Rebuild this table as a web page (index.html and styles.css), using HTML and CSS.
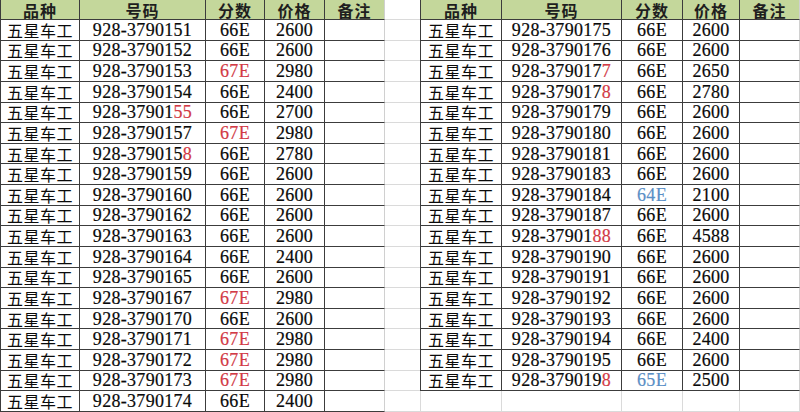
FILE: index.html
```html
<!DOCTYPE html>
<html lang="zh">
<head>
<meta charset="utf-8">
<link rel="stylesheet" href="styles.css">
</head>
<body>
<div class="sheet">
  <div class="c t h l">品种</div><div class="c t h">号码</div><div class="c t h">分数</div><div class="c t h">价格</div><div class="c t h x">备注</div><div class="c g"></div><div class="c t h l">品种</div><div class="c t h">号码</div><div class="c t h">分数</div><div class="c t h">价格</div><div class="c t h x">备注</div>

  <div class="c t n l">五星车工</div><div class="c t">928-3790151</div><div class="c t">66E</div><div class="c t">2600</div><div class="c t x"></div><div class="c g"></div><div class="c t n l">五星车工</div><div class="c t">928-3790175</div><div class="c t">66E</div><div class="c t">2600</div><div class="c t x"></div>

  <div class="c t n l">五星车工</div><div class="c t">928-3790152</div><div class="c t">66E</div><div class="c t">2600</div><div class="c t x"></div><div class="c g"></div><div class="c t n l">五星车工</div><div class="c t">928-3790176</div><div class="c t">66E</div><div class="c t">2600</div><div class="c t x"></div>

  <div class="c t n l">五星车工</div><div class="c t">928-3790153</div><div class="c t r">67E</div><div class="c t">2980</div><div class="c t x"></div><div class="c g"></div><div class="c t n l">五星车工</div><div class="c t">928-379017<span class="r">7</span></div><div class="c t">66E</div><div class="c t">2650</div><div class="c t x"></div>

  <div class="c t n l">五星车工</div><div class="c t">928-3790154</div><div class="c t">66E</div><div class="c t">2400</div><div class="c t x"></div><div class="c g"></div><div class="c t n l">五星车工</div><div class="c t">928-379017<span class="r">8</span></div><div class="c t">66E</div><div class="c t">2780</div><div class="c t x"></div>

  <div class="c t n l">五星车工</div><div class="c t">928-37901<span class="r">55</span></div><div class="c t">66E</div><div class="c t">2700</div><div class="c t x"></div><div class="c g"></div><div class="c t n l">五星车工</div><div class="c t">928-3790179</div><div class="c t">66E</div><div class="c t">2600</div><div class="c t x"></div>

  <div class="c t n l">五星车工</div><div class="c t">928-3790157</div><div class="c t r">67E</div><div class="c t">2980</div><div class="c t x"></div><div class="c g"></div><div class="c t n l">五星车工</div><div class="c t">928-3790180</div><div class="c t">66E</div><div class="c t">2600</div><div class="c t x"></div>

  <div class="c t n l">五星车工</div><div class="c t">928-379015<span class="r">8</span></div><div class="c t">66E</div><div class="c t">2780</div><div class="c t x"></div><div class="c g"></div><div class="c t n l">五星车工</div><div class="c t">928-3790181</div><div class="c t">66E</div><div class="c t">2600</div><div class="c t x"></div>

  <div class="c t n l">五星车工</div><div class="c t">928-3790159</div><div class="c t">66E</div><div class="c t">2600</div><div class="c t x"></div><div class="c g"></div><div class="c t n l">五星车工</div><div class="c t">928-3790183</div><div class="c t">66E</div><div class="c t">2600</div><div class="c t x"></div>

  <div class="c t n l">五星车工</div><div class="c t">928-3790160</div><div class="c t">66E</div><div class="c t">2600</div><div class="c t x"></div><div class="c g"></div><div class="c t n l">五星车工</div><div class="c t">928-3790184</div><div class="c t b">64E</div><div class="c t">2100</div><div class="c t x"></div>

  <div class="c t n l">五星车工</div><div class="c t">928-3790162</div><div class="c t">66E</div><div class="c t">2600</div><div class="c t x"></div><div class="c g"></div><div class="c t n l">五星车工</div><div class="c t">928-3790187</div><div class="c t">66E</div><div class="c t">2600</div><div class="c t x"></div>

  <div class="c t n l">五星车工</div><div class="c t">928-3790163</div><div class="c t">66E</div><div class="c t">2600</div><div class="c t x"></div><div class="c g"></div><div class="c t n l">五星车工</div><div class="c t">928-37901<span class="r">88</span></div><div class="c t">66E</div><div class="c t">4588</div><div class="c t x"></div>

  <div class="c t n l">五星车工</div><div class="c t">928-3790164</div><div class="c t">66E</div><div class="c t">2400</div><div class="c t x"></div><div class="c g"></div><div class="c t n l">五星车工</div><div class="c t">928-3790190</div><div class="c t">66E</div><div class="c t">2600</div><div class="c t x"></div>

  <div class="c t n l">五星车工</div><div class="c t">928-3790165</div><div class="c t">66E</div><div class="c t">2600</div><div class="c t x"></div><div class="c g"></div><div class="c t n l">五星车工</div><div class="c t">928-3790191</div><div class="c t">66E</div><div class="c t">2600</div><div class="c t x"></div>

  <div class="c t n l">五星车工</div><div class="c t">928-3790167</div><div class="c t r">67E</div><div class="c t">2980</div><div class="c t x"></div><div class="c g"></div><div class="c t n l">五星车工</div><div class="c t">928-3790192</div><div class="c t">66E</div><div class="c t">2600</div><div class="c t x"></div>

  <div class="c t n l">五星车工</div><div class="c t">928-3790170</div><div class="c t">66E</div><div class="c t">2600</div><div class="c t x"></div><div class="c g"></div><div class="c t n l">五星车工</div><div class="c t">928-3790193</div><div class="c t">66E</div><div class="c t">2600</div><div class="c t x"></div>

  <div class="c t n l">五星车工</div><div class="c t">928-3790171</div><div class="c t r">67E</div><div class="c t">2980</div><div class="c t x"></div><div class="c g"></div><div class="c t n l">五星车工</div><div class="c t">928-3790194</div><div class="c t">66E</div><div class="c t">2400</div><div class="c t x"></div>

  <div class="c t n l">五星车工</div><div class="c t">928-3790172</div><div class="c t r">67E</div><div class="c t">2980</div><div class="c t x"></div><div class="c g"></div><div class="c t n l">五星车工</div><div class="c t">928-3790195</div><div class="c t">66E</div><div class="c t">2600</div><div class="c t x"></div>

  <div class="c t n l">五星车工</div><div class="c t">928-3790173</div><div class="c t r">67E</div><div class="c t">2980</div><div class="c t x"></div><div class="c g"></div><div class="c t n l">五星车工</div><div class="c t">928-379019<span class="r">8</span></div><div class="c t b">65E</div><div class="c t">2500</div><div class="c t x"></div>

  <div class="c t n l">五星车工</div><div class="c t">928-3790174</div><div class="c t">66E</div><div class="c t">2400</div><div class="c t x"></div><div class="c g"></div><div class="c lf"></div><div class="c"></div><div class="c"></div><div class="c"></div><div class="c"></div>
</div>
</body>
</html>
```

FILE: styles.css
```css
html, body {
  margin: 0;
  padding: 0;
  background: #ffffff;
}

.sheet {
  display: grid;
  grid-template-columns: 80px 126px 59px 60px 60px 35px 82px 120px 61px 57px 60px;
  grid-template-rows: 20px repeat(19, 20.63px);
  width: 800px;
  height: 412px;
  overflow: hidden;
  font-family: "Liberation Serif", "Noto Sans CJK SC", serif;
  font-size: 18px;
  color: #0a0a0a;
}

.c {
  box-sizing: border-box;
  border-right: 1px solid #dadada;
  border-bottom: 1px solid #dadada;
  display: flex;
  align-items: center;
  justify-content: center;
  white-space: nowrap;
  line-height: 18px;
  letter-spacing: 0.3px;
  -webkit-text-stroke: 0.2px currentColor;
}

.t {
  border-right-color: #3c3c3c;
  border-bottom-color: #3c3c3c;
}

.t.x {
  border-right-color: #d0d0d0;
}

.l {
  border-left: 1px solid #3c3c3c;
}

.lf {
  border-left: 1px solid #dadada;
}

.g {
  border-right: none;
}

.h {
  background: #c4d79b;
  font-family: "Noto Sans CJK SC", sans-serif;
  font-weight: 700;
  font-size: 16px;
  line-height: 18px;
  color: #1e1e1e;
  letter-spacing: 1px;
  -webkit-text-stroke: 0;
}

.n {
  font-family: "Noto Sans CJK SC", sans-serif;
  font-size: 16px;
  letter-spacing: 0.5px;
  -webkit-text-stroke: 0;
}

.r {
  color: #d23a46;
}

.b {
  color: #5a8fc6;
}
```
